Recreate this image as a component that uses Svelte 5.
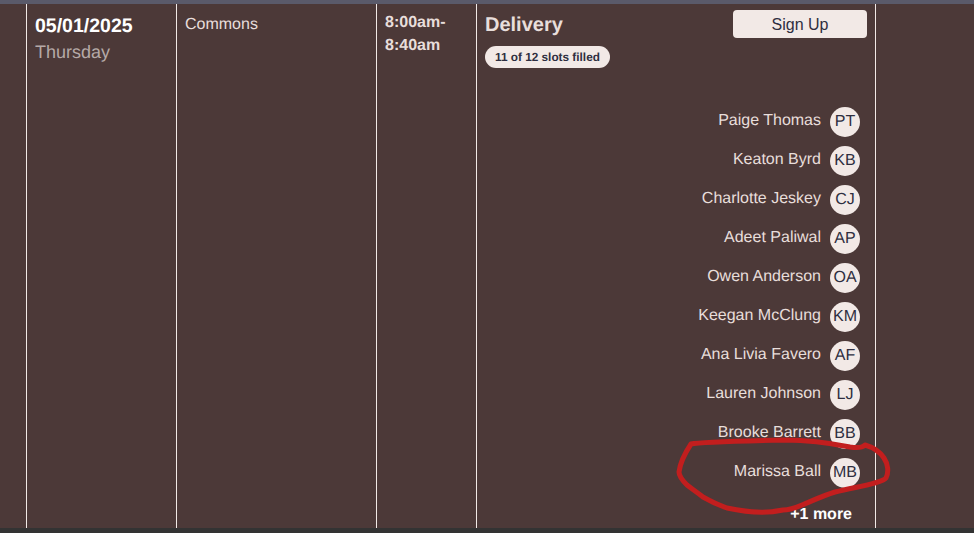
<script>
  const people = [
    ['Paige Thomas', 'PT'], ['Keaton Byrd', 'KB'], ['Charlotte Jeskey', 'CJ'], ['Adeet Paliwal', 'AP'],
    ['Owen Anderson', 'OA'], ['Keegan McClung', 'KM'], ['Ana Livia Favero', 'AF'], ['Lauren Johnson', 'LJ'],
    ['Brooke Barrett', 'BB'], ['Marissa Ball', 'MB']
  ];
</script>

<div class="page">
  <div class="topbar"></div>
  <div class="row">
    <div class="cell c0"></div>
    <div class="cell c1">
      <div class="date">05/01/2025</div>
      <div class="day">Thursday</div>
    </div>
    <div class="cell c2">Commons</div>
    <div class="cell c3">8:00am-<br />8:40am</div>
    <div class="cell c4">
      <div class="head">
        <div>
          <div class="title">Delivery</div>
          <span class="badge">11 of 12 slots filled</span>
        </div>
        <button class="signup">Sign Up</button>
      </div>
      <ul class="people">
        {#each people as [name, initials]}
          <li><span class="name">{name}</span><span class="avatar">{initials}</span></li>
        {/each}
      </ul>
      <div class="more">+1 more</div>
    </div>
    <div class="cell c5"></div>
  </div>
  <div class="footer"></div>
  <svg class="scribble" width="974" height="533" viewBox="0 0 974 533" fill="none">
    <path d="M691 444 C700 442 740 441 785 440 C810 440 835 444 850 447 C856 448 862 448 865 445 C872 447 880 452 884 458 C888 464 889 472 886 478 C882 483 860 486 835 492 C822 496 812 501 802 505 C795 508 790 510 783 510 C770 513 750 513 727 508 C718 505 710 501 703 497 C697 492 692 489 687 485 C683 481 679 476 679 472 C680 464 685 453 691 444 Z" stroke="#c21e1e" stroke-width="5" stroke-linejoin="round" />
  </svg>
</div>

<style>
  :global(body) { margin: 0; background: #333; }
  .page { position: relative; width: 974px; height: 533px; display: flex; flex-direction: column; overflow: hidden; font-family: "Liberation Sans", Arial, sans-serif; background: #333; text-rendering: geometricPrecision; }
  .topbar { height: 4px; background: #5a5a6a; flex: none; }
  .row { height: 524px; display: flex; background: #4c3938; flex: none; color: #e8dedb; }
  .footer { flex: 1; background: #333; }
  .cell { box-sizing: border-box; height: 100%; border-right: 1px solid #f2e9e6; flex: none; }
  .c0 { width: 27px; }
  .c1 { width: 150px; padding: 11px 8px; }
  .c2 { width: 200px; padding: 12px 8px; font-size: 16px; line-height: 18px; }
  .c3 { width: 100px; padding: 7px 8px; font-size: 16px; line-height: 23px; font-weight: 700; }
  .c4 { width: 399px; padding: 6px 8px 0; display: flex; flex-direction: column; }
  .c5 { flex: 1; border-right: 0; }
  .date { font-size: 19.5px; font-weight: 700; line-height: 22px; color: #fff; }
  .day { font-size: 18px; line-height: 22px; margin-top: 4px; color: #b5a9a7; }
  .head { display: flex; justify-content: space-between; align-items: flex-start; height: 92px; }
  .title { font-size: 20px; font-weight: 700; line-height: 24px; margin-top: 3px; }
  .badge { display: inline-block; margin-top: 9px; padding: 0 10px; height: 22px; line-height: 22px; border-radius: 11px; background: #f2e9e6; color: #2e2e40; font-size: 11.8px; font-weight: 700; }
  .signup { width: 134px; height: 28px; border: 0; padding: 1px 0 0; border-radius: 4px; background: #f2e9e6; color: #2e2e40; font: 16px "Liberation Sans", Arial, sans-serif; }
  .people { list-style: none; margin: 0; padding: 0 7px 0 0; }
  .people li { height: 39px; display: flex; justify-content: flex-end; align-items: center; gap: 9px; }
  .name { font-size: 16px; position: relative; top: -1px; }
  .avatar { width: 30px; height: 30px; border-radius: 50%; background: #f2e9e6; color: #2e2e40; display: flex; align-items: center; justify-content: center; font-size: 16px; }
  .more { text-align: right; padding-right: 15px; font-size: 16px; font-weight: 700; color: #fff; margin-top: 14px; }
  .scribble { position: absolute; left: 0; top: 0; pointer-events: none; }
</style>
